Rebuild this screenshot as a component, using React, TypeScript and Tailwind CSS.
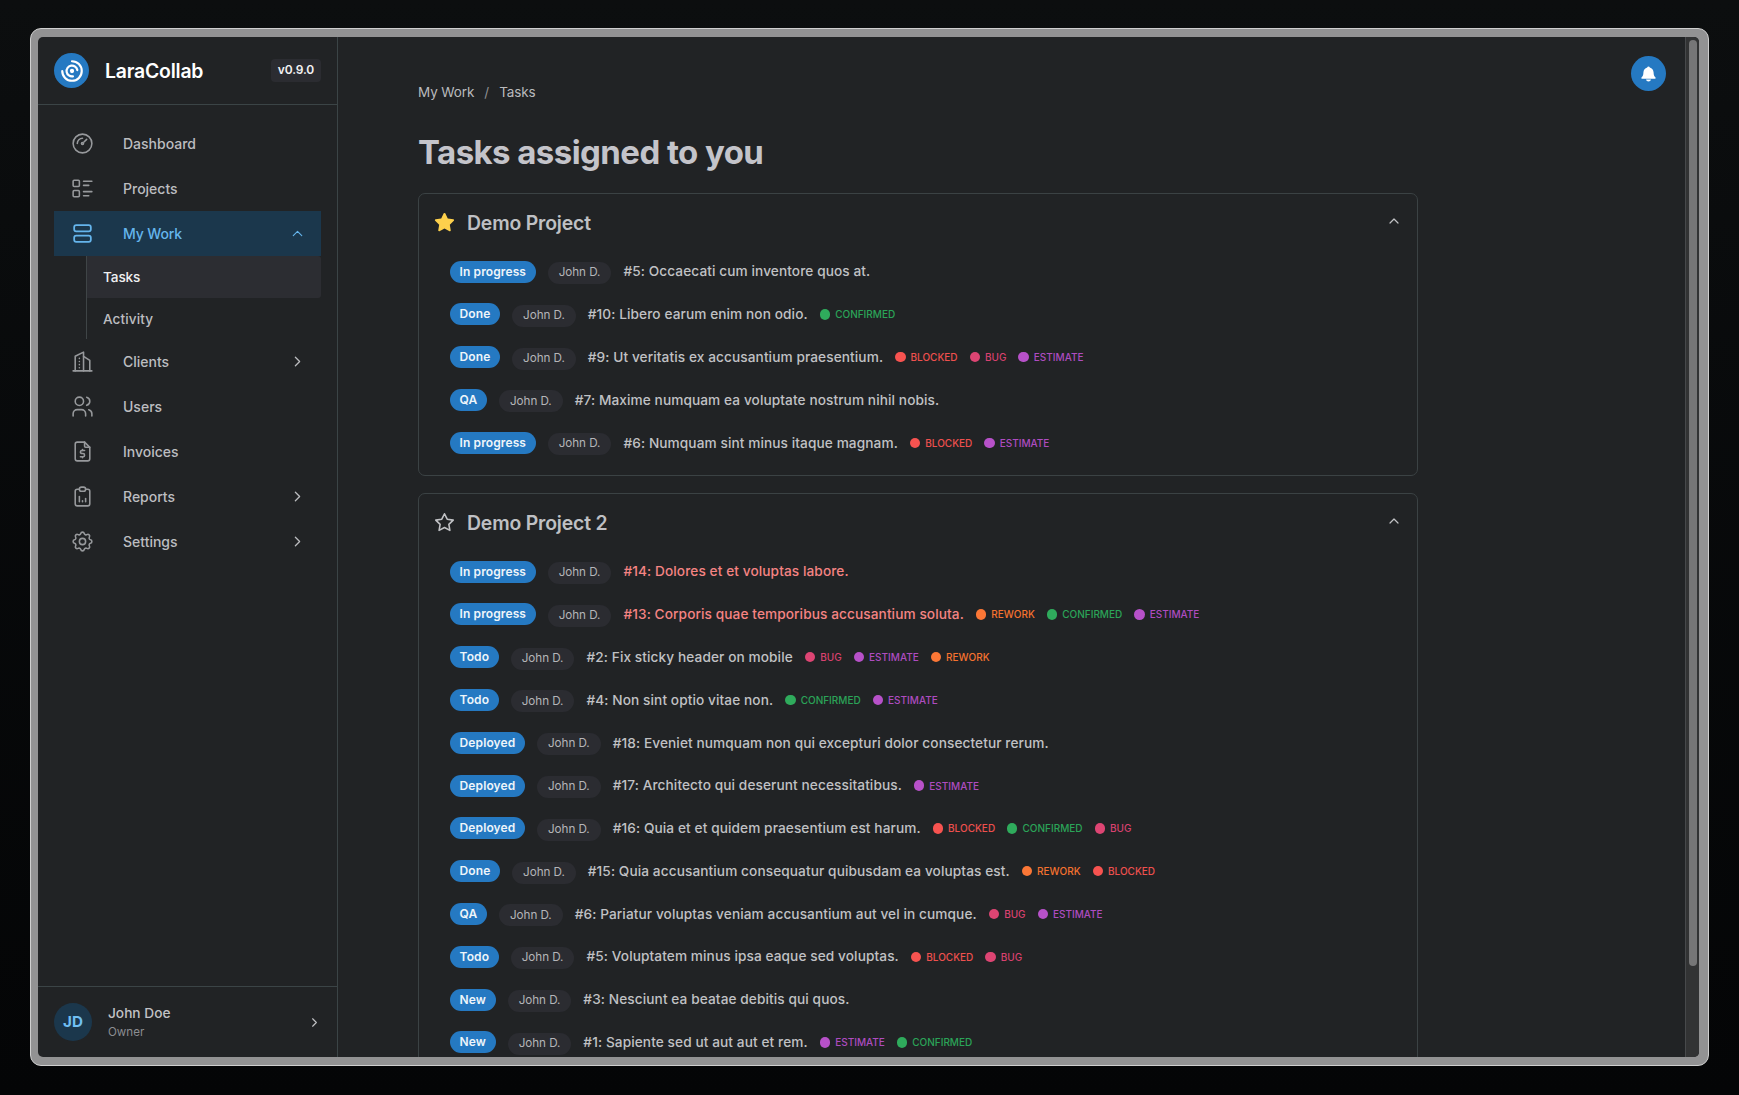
import React from "react";
import {
  TbBuildingSkyscraper,
  TbChartArcs,
  TbChevronRight,
  TbChevronUp,
  TbFileDollar,
  TbGauge,
  TbLayoutList,
  TbListDetails,
  TbReportAnalytics,
  TbSettings,
  TbStar,
  TbStarFilled,
  TbUsers,
} from "react-icons/tb";

type Label = "CONFIRMED" | "BLOCKED" | "BUG" | "ESTIMATE" | "REWORK";
type Task = { status: string; title: string; labels?: Label[]; overdue?: boolean };

const labelText: Record<Label, string> = {
  CONFIRMED: "text-[#2ba358]",
  BLOCKED: "text-[#ee504e]",
  BUG: "text-[#d9416f]",
  ESTIMATE: "text-[#ae4cc0]",
  REWORK: "text-[#f5722f]",
};
const labelDot: Record<Label, string> = {
  CONFIRMED: "bg-[#2fab5c]",
  BLOCKED: "bg-[#f75350]",
  BUG: "bg-[#dd4573]",
  ESTIMATE: "bg-[#b751c9]",
  REWORK: "bg-[#fb7736]",
};

const projectOne: Task[] = [
  { status: "In progress", title: "#5: Occaecati cum inventore quos at." },
  { status: "Done", title: "#10: Libero earum enim non odio.", labels: ["CONFIRMED"] },
  { status: "Done", title: "#9: Ut veritatis ex accusantium praesentium.", labels: ["BLOCKED", "BUG", "ESTIMATE"] },
  { status: "QA", title: "#7: Maxime numquam ea voluptate nostrum nihil nobis." },
  { status: "In progress", title: "#6: Numquam sint minus itaque magnam.", labels: ["BLOCKED", "ESTIMATE"] },
];

const projectTwo: Task[] = [
  { status: "In progress", title: "#14: Dolores et et voluptas labore.", overdue: true },
  { status: "In progress", title: "#13: Corporis quae temporibus accusantium soluta.", labels: ["REWORK", "CONFIRMED", "ESTIMATE"], overdue: true },
  { status: "Todo", title: "#2: Fix sticky header on mobile", labels: ["BUG", "ESTIMATE", "REWORK"] },
  { status: "Todo", title: "#4: Non sint optio vitae non.", labels: ["CONFIRMED", "ESTIMATE"] },
  { status: "Deployed", title: "#18: Eveniet numquam non qui excepturi dolor consectetur rerum." },
  { status: "Deployed", title: "#17: Architecto qui deserunt necessitatibus.", labels: ["ESTIMATE"] },
  { status: "Deployed", title: "#16: Quia et et quidem praesentium est harum.", labels: ["BLOCKED", "CONFIRMED", "BUG"] },
  { status: "Done", title: "#15: Quia accusantium consequatur quibusdam ea voluptas est.", labels: ["REWORK", "BLOCKED"] },
  { status: "QA", title: "#6: Pariatur voluptas veniam accusantium aut vel in cumque.", labels: ["BUG", "ESTIMATE"] },
  { status: "Todo", title: "#5: Voluptatem minus ipsa eaque sed voluptas.", labels: ["BLOCKED", "BUG"] },
  { status: "New", title: "#3: Nesciunt ea beatae debitis qui quos." },
  { status: "New", title: "#1: Sapiente sed ut aut aut et rem.", labels: ["ESTIMATE", "CONFIRMED"] },
];

function TaskRow({ task }: { task: Task }) {
  return (
    <div className="flex h-[42.8px] shrink-0 items-center whitespace-nowrap">
      <span className="flex h-[22px] items-center rounded-full bg-[#2579c2] px-[9.6px] text-[12px] font-semibold tracking-[0.11px] text-[#eef5fa]">
        {task.status}
      </span>
      <span className="mt-[3px] ml-3 flex h-[22px] items-center rounded-full bg-[#2b2c31] px-[11px] text-[11.7px] tracking-[-0.05px] text-[#b4b5b8]">
        John D.
      </span>
      <span
        className={
          task.overdue
            ? "ml-3 text-[13.65px] font-medium tracking-[0.1px] text-[#f58383]"
            : "ml-3 text-[13.65px] font-medium tracking-[0.1px] text-[#c0c1c4]"
        }
      >
        {task.title}
      </span>
      {task.labels?.map((label) => (
        <span key={label} className={`ml-3 flex items-center gap-[5px] text-[10px] leading-none font-medium ${labelText[label]}`}>
          <i className={`size-[10.4px] rounded-full ${labelDot[label]}`} />
          {label}
        </span>
      ))}
    </div>
  );
}

function ProjectCard({ name, favorite, tasks }: { name: string; favorite?: boolean; tasks: Task[] }) {
  return (
    <section className="w-[1000px] shrink-0 rounded-[7px] border border-[#3b4244] pb-[11.3px]">
      <header className="flex h-[56.2px] items-center pr-[15px] pl-[15px]">
        {favorite ? <TbStarFilled size={21} className="text-[#fdd04c]" /> : <TbStar size={21} strokeWidth={1.8} className="text-[#c1c2c5]" />}
        <h2 className="mt-[2px] ml-3 text-[19.4px] font-semibold tracking-[-0.17px] text-[#bfc0c4]">{name}</h2>
        <TbChevronUp size={16} strokeWidth={1.8} className="mb-[2px] ml-auto text-[#c1c2c5]" />
      </header>
      <div className="flex flex-col pl-[31px]">
        {tasks.map((task) => (
          <TaskRow key={task.title} task={task} />
        ))}
      </div>
    </section>
  );
}

function NavItem({ icon: Icon, label, expandable }: { icon: React.ComponentType<any>; label: string; expandable?: boolean }) {
  return (
    <a className="flex h-[45px] shrink-0 items-center pr-[15.5px] pl-4 text-[14px] font-medium text-[#bcbdc0]">
      <Icon size={25} strokeWidth={1.5} className="text-[#97999c]" />
      <span className="ml-7">{label}</span>
      {expandable && <TbChevronRight size={17} strokeWidth={1.8} className="ml-auto" />}
    </a>
  );
}

function Sidebar() {
  return (
    <aside className="flex w-[300px] shrink-0 flex-col border-r border-[#3b4446]">
      <div className="flex h-[68px] shrink-0 items-center border-b border-[#3b4446] pr-4 pl-4">
        <div className="flex size-[35px] items-center justify-center rounded-full bg-[#2579c2] text-white">
          <TbChartArcs size={26} strokeWidth={2} />
        </div>
        <span className="mt-[2px] ml-4 text-[19.4px] font-semibold tracking-[-0.2px] text-white">LaraCollab</span>
        <span className="mb-px ml-auto flex h-[23px] items-center rounded-[4px] bg-[#2b2c31] px-[7px] text-[12px] font-semibold tracking-[-0.15px] text-[#f2f2f3]">
          v0.9.0
        </span>
      </div>
      <nav className="flex flex-1 flex-col px-4 pt-4">
        <NavItem icon={TbGauge} label="Dashboard" />
        <NavItem icon={TbListDetails} label="Projects" />
        <a className="flex h-[45px] items-center bg-[#1b374c] pr-[15.5px] pl-4 text-[14px] font-medium tracking-[-0.15px] text-[#65b5ec]">
          <TbLayoutList size={25} strokeWidth={1.7} />
          <span className="ml-7">My Work</span>
          <TbChevronUp size={17} strokeWidth={1.6} className="ml-auto" />
        </a>
        <div className="ml-8 flex flex-col border-l border-[#3f4547] text-[13.6px] font-medium">
          <a className="flex h-[42px] items-center rounded-r-[3px] bg-[#2c2d32] pl-4 tracking-[-0.1px] text-[#f0f0f1]">Tasks</a>
          <a className="flex h-[41px] items-center pt-[2px] pl-4 tracking-[0.08px] text-[#bcbdc0]">Activity</a>
        </div>
        <NavItem icon={TbBuildingSkyscraper} label="Clients" expandable />
        <NavItem icon={TbUsers} label="Users" />
        <NavItem icon={TbFileDollar} label="Invoices" />
        <NavItem icon={TbReportAnalytics} label="Reports" expandable />
        <NavItem icon={TbSettings} label="Settings" expandable />
      </nav>
      <div className="flex h-[71px] shrink-0 items-center border-t border-[#3b4446] pr-[15.5px] pl-4">
        <div className="flex size-[38px] items-center justify-center rounded-full bg-[#1b374c] text-[15.2px] font-bold text-[#70bff2]">
          JD
        </div>
        <div className="ml-4 flex flex-col">
          <span className="text-[13.7px] leading-[19px] font-medium text-[#c1c2c5]">John Doe</span>
          <span className="text-[11.6px] leading-[18px] text-[#8b8d91]">Owner</span>
        </div>
        <TbChevronRight size={15} strokeWidth={1.8} className="ml-auto text-[#c1c2c5]" />
      </div>
    </aside>
  );
}

function BellIcon() {
  return (
    <svg width="15" height="16" viewBox="0 0 15 16" fill="currentColor">
      <path d="M7.5 0.5c.7 0 1.1.4 1.3 1 2.2.6 3.7 2.4 3.8 5 .1 2.7.5 3.7 1.9 5 .5.5.2 1.2-.5 1.2H1c-.7 0-1-.7-.5-1.2 1.4-1.3 1.8-2.3 1.9-5 .1-2.6 1.6-4.4 3.8-5 .2-.6.6-1 1.3-1z" />
      <path d="M5 13.5h5c-.3 1.3-1.2 2-2.5 2s-2.2-.7-2.5-2z" />
    </svg>
  );
}

export default function App() {
  return (
    <div className="flex h-[1095px] w-[1739px] overflow-hidden bg-linear-to-b from-[#0c0e0f] to-[#040506] pt-[28px] pl-[30px] font-[Inter,sans-serif]">
      <div className="h-[1038px] w-[1679px] rounded-[11px] border border-[#cfcfcf] bg-[#929293] py-2 pr-[9px] pl-[7px]">
        <div className="flex h-full overflow-hidden rounded-[5px] bg-[#212325]">
          <Sidebar />
          <main className="flex min-w-0 flex-1 justify-between overflow-hidden">
            <div className="flex h-[1020px] flex-col overflow-hidden pl-[80px]">
              <div className="mt-[45px] flex h-5 shrink-0 items-center text-[13.5px] tracking-[-0.1px] text-[#b9babd]">
                <span>My Work</span>
                <span className="mx-[10px] text-[#8f9194]">/</span>
                <span>Tasks</span>
              </div>
              <h1 className="mt-[30px] mb-[21px] h-10 shrink-0 text-[33px] leading-10 font-bold tracking-[-0.57px] text-[#c4c4ca]">
                Tasks assigned to you
              </h1>
              <div className="flex flex-col gap-[16.5px]">
                <ProjectCard name="Demo Project" favorite tasks={projectOne} />
                <ProjectCard name="Demo Project 2" tasks={projectTwo} />
              </div>
            </div>
            <button className="mt-[19px] mr-[19px] flex size-[35px] items-center justify-center rounded-full bg-[#2579c2] text-white">
              <BellIcon />
            </button>
          </main>
          <div className="w-[14px] shrink-0 border-l border-[#47494b] bg-[#323334] pt-[3px] pl-[3px]">
            <div className="h-[926px] w-[8px] rounded-full bg-[#767677]" />
          </div>
        </div>
      </div>
    </div>
  );
}
